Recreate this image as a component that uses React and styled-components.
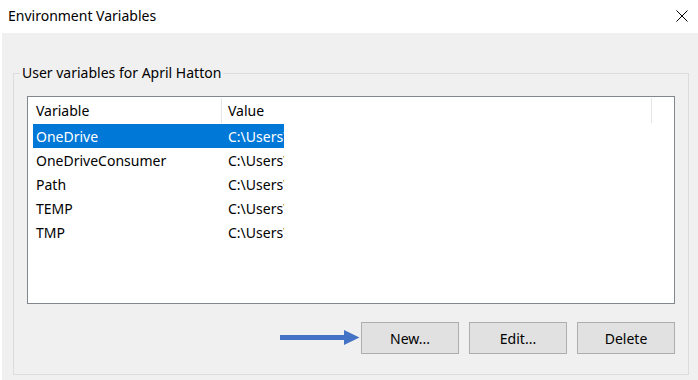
import React from "react";
import styled, { createGlobalStyle } from "styled-components";

const GlobalStyle = createGlobalStyle`
  html, body {
    margin: 0;
    padding: 0;
    background: #ffffff;
  }
  body {
    font-family: "Noto Sans", "Open Sans", sans-serif;
    color: #000000;
  }
`;

const Window = styled.div`
  width: 698px;
  height: 380px;
  display: flex;
  flex-direction: column;
  background: #ffffff;
  overflow: hidden;
`;

const TitleBar = styled.div`
  height: 33px;
  flex: none;
  display: flex;
  align-items: center;
  justify-content: space-between;
  padding: 0 10px 2px 8px;
  box-sizing: border-box;
`;

const Title = styled.div`
  font-size: 14px;
  line-height: 20px;
`;

const Body = styled.div`
  flex: 1;
  margin-left: 2px;
  background: #f0f0f0;
  padding: 30px 9px 0 11px;
`;

const Group = styled.fieldset`
  margin: 0;
  padding: 13px 12px 20px 13px;
  border: 1px solid #dcdcdc;
  min-width: 0;
`;

const Legend = styled.legend`
  font-size: 14px;
  line-height: 20px;
  padding: 0 2px;
  margin-left: -7px;
`;

const ListBox = styled.div`
  width: 648px;
  height: 208px;
  box-sizing: border-box;
  border: 1px solid #828790;
  background: #ffffff;
  overflow: hidden;
`;

const Header = styled.div`
  display: flex;
  height: 26px;
`;

const HeaderCell = styled.div`
  width: ${(p) => p.$width}px;
  height: 25px;
  margin-top: 1px;
  padding: 1px 0 0 ${(p) => p.$pad}px;
  box-sizing: border-box;
  border-right: 1px solid #e5e5e5;
  font-size: 14px;
  line-height: 24px;
`;

const Rows = styled.div`
  margin-top: 1px;
  padding-left: 5px;
`;

const Row = styled.div`
  display: flex;
  width: 251px;
  height: 24px;
  background: ${(p) => (p.$selected ? "#0078d7" : "transparent")};
  color: ${(p) => (p.$selected ? "#ffffff" : "#000000")};
  font-size: 14px;
  line-height: 25px;
`;

const Cell = styled.div`
  width: ${(p) => (p.$width ? `${p.$width}px` : "auto")};
  flex: ${(p) => (p.$width ? "none" : "1")};
  padding-left: 3px;
  box-sizing: border-box;
  white-space: nowrap;
  overflow: hidden;
`;

const ButtonRow = styled.div`
  display: flex;
  justify-content: flex-end;
  align-items: center;
  margin-top: 18px;
  width: 648px;
`;

const Button = styled.button`
  width: 98px;
  height: 32px;
  margin-left: ${(p) => p.$gap}px;
  border: 1px solid #adadad;
  background: #e1e1e1;
  font-family: inherit;
  font-size: 14px;
  color: #000000;
  padding: 0;
`;

const vars = [
  { name: "OneDrive", value: "C:\\Users\\April Hatton\\OneDrive" },
  { name: "OneDriveConsumer", value: "C:\\Users\\April Hatton\\OneDrive" },
  { name: "Path", value: "C:\\Users\\April Hatton\\AppData\\Local" },
  { name: "TEMP", value: "C:\\Users\\April Hatton\\AppData\\Local\\Temp" },
  { name: "TMP", value: "C:\\Users\\April Hatton\\AppData\\Local\\Temp" },
];

const CloseIcon = () => (
  <svg width="12" height="12" viewBox="0 0 12 12">
    <path d="M0.5 0.5 L11.5 11.5 M11.5 0.5 L0.5 11.5" stroke="#000" strokeWidth="1" fill="none" />
  </svg>
);

const Arrow = () => (
  <svg width="80" height="16" viewBox="0 0 80 16">
    <rect x="0" y="5" width="66" height="5" fill="#4472c4" />
    <polygon points="64,0 79.5,7.5 64,15" fill="#4472c4" />
  </svg>
);

const App = () => {
  return (
    <Window>
      <GlobalStyle />
      <TitleBar>
        <Title>Environment Variables</Title>
        <CloseIcon />
      </TitleBar>
      <Body>
        <Group>
          <Legend>User variables for April Hatton</Legend>
          <ListBox>
            <Header>
              <HeaderCell $width={194} $pad={8}>Variable</HeaderCell>
              <HeaderCell $width={430} $pad={6}>Value</HeaderCell>
            </Header>
            <Rows>
              {vars.map((v, i) => (
                <Row key={v.name} $selected={i === 0}>
                  <Cell $width={192}>{v.name}</Cell>
                  <Cell>{v.value}</Cell>
                </Row>
              ))}
            </Rows>
          </ListBox>
          <ButtonRow>
            <Arrow />
            <Button $gap={1}>New...</Button>
            <Button $gap={10}>Edit...</Button>
            <Button $gap={10}>Delete</Button>
          </ButtonRow>
        </Group>
      </Body>
    </Window>
  );
};

export default App;
